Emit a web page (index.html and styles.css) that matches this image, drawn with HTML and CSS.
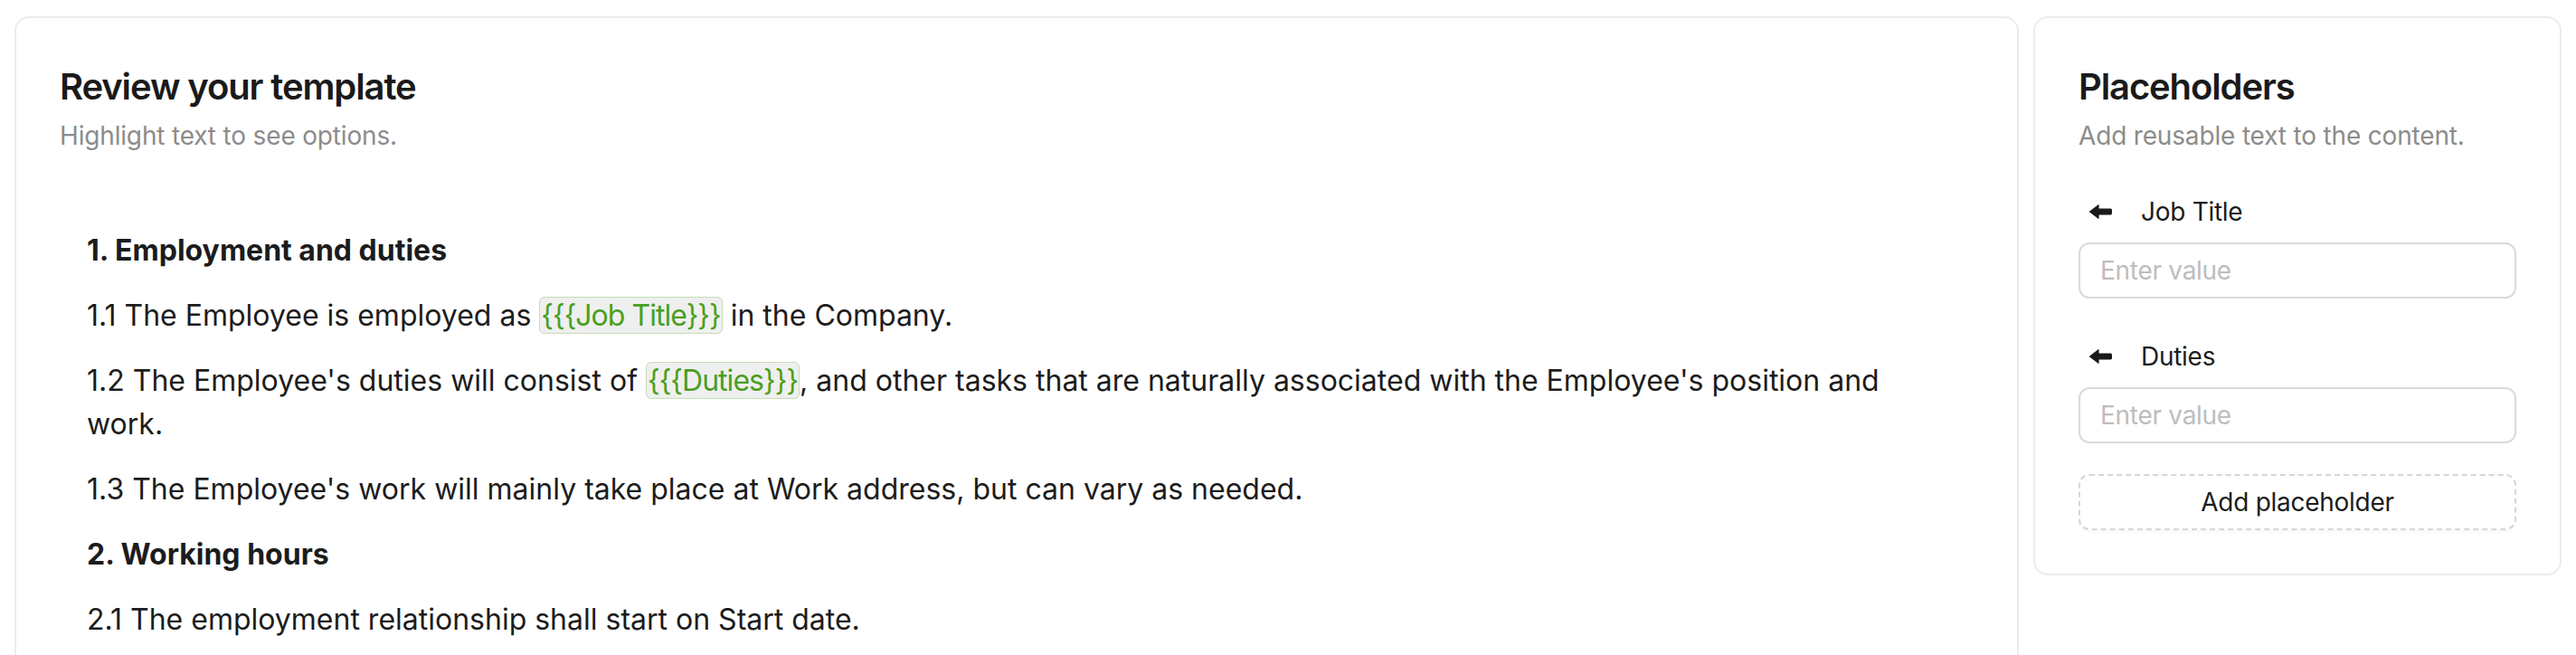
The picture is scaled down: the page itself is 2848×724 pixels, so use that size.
FILE: index.html
```html
<!DOCTYPE html>
<html lang="en">
<head>
<meta charset="utf-8">
<title>Review your template</title>
<link rel="stylesheet" href="styles.css">
</head>
<body>
<div class="page">
  <section class="card editor">
    <header class="card-head">
      <h1 class="card-title">Review your template</h1>
      <p class="card-sub">Highlight text to see options.</p>
    </header>
    <div class="doc">
      <p class="doc-h">1. Employment and duties</p>
      <p class="doc-p">1.1 The Employee is employed as <span class="chip">{{{Job Title}}}</span> in the Company.</p>
      <p class="doc-p">1.2 The Employee's duties will consist of <span class="chip">{{{Duties}}}</span>, and other tasks that are naturally associated with the Employee's position and work.</p>
      <p class="doc-p">1.3 The Employee's work will mainly take place at Work address, but can vary as needed.</p>
      <p class="doc-h">2. Working hours</p>
      <p class="doc-p">2.1 The employment relationship shall start on Start date.</p>
    </div>
  </section>
  <aside class="card side">
    <header class="card-head">
      <h2 class="card-title">Placeholders</h2>
      <p class="card-sub">Add reusable text to the content.</p>
    </header>
    <div class="ph-list">
      <div class="ph-group">
        <div class="ph-label">
          <span class="ph-arrow"><svg width="26" height="18" viewBox="0 0 26 18"><path d="M0.6 9 L10.4 1.4 Q11.6 0.6 11.6 2 V5.6 H24.4 Q26 5.6 26 7.2 V10.8 Q26 12.4 24.4 12.4 H11.6 V16 Q11.6 17.4 10.4 16.6 Z" fill="#1a1a1a"/></svg></span>
          <span class="ph-name">Job Title</span>
        </div>
        <input class="ph-input" type="text" placeholder="Enter value">
      </div>
      <div class="ph-group">
        <div class="ph-label">
          <span class="ph-arrow"><svg width="26" height="18" viewBox="0 0 26 18"><path d="M0.6 9 L10.4 1.4 Q11.6 0.6 11.6 2 V5.6 H24.4 Q26 5.6 26 7.2 V10.8 Q26 12.4 24.4 12.4 H11.6 V16 Q11.6 17.4 10.4 16.6 Z" fill="#1a1a1a"/></svg></span>
          <span class="ph-name">Duties</span>
        </div>
        <input class="ph-input" type="text" placeholder="Enter value">
      </div>
      <button class="ph-add" type="button">Add placeholder</button>
    </div>
  </aside>
</div>
</body>
</html>
```

FILE: styles.css
```css
* { box-sizing: border-box; }

html, body {
  margin: 0;
  background: #ffffff;
  font-family: Inter, "Noto Sans", "Liberation Sans", sans-serif;
  color: #1c1c1c;
}

.page {
  display: flex;
  align-items: flex-start;
  gap: 16px;
  padding: 18px 16px 0 16px;
}

.card {
  border: 2px solid #ececec;
  border-radius: 16px;
  background: #ffffff;
  padding: 52px 48px 48px 48px;
}

.editor {
  flex: 1 1 auto;
  min-width: 0;
}

.side {
  flex: 0 0 584px;
}

.card-title {
  margin: 0;
  font-size: 40px;
  line-height: 48px;
  font-weight: 600;
  color: #1a1a1a;
  letter-spacing: -0.028em;
}

.card-sub {
  margin: 10px 0 0 0;
  font-size: 28px;
  line-height: 40px;
  color: #8c8c8c;
  letter-spacing: -0.006em;
}

.doc {
  margin-top: 83px;
  padding: 0 30px;
  font-size: 32px;
  line-height: 48px;
  color: #1c1c1c;
}

.doc p {
  margin: 0 0 24px 0;
}

.doc-h {
  font-weight: 700;
}

.chip {
  color: #4a9f1e;
  background: #efefef;
  border: 1px solid #c6ddb7;
  border-radius: 6px;
  padding: 0 1px;
  letter-spacing: -0.03em;
}

.ph-list {
  display: flex;
  flex-direction: column;
}

.ph-group {
  margin-top: 44px;
  display: flex;
  flex-direction: column;
  gap: 14px;
}

.ph-label {
  display: flex;
  align-items: center;
  gap: 21px;
  height: 40px;
  font-size: 28px;
  color: #1c1c1c;
  letter-spacing: -0.01em;
}

.ph-arrow {
  width: 48px;
  display: flex;
  justify-content: center;
  align-items: center;
}

.ph-arrow svg { display: block; }

.ph-input {
  height: 62px;
  width: 100%;
  border: 2px solid #dadada;
  border-radius: 12px;
  padding: 0 22px;
  font-family: inherit;
  font-size: 28px;
  letter-spacing: -0.01em;
  color: #1c1c1c;
  background: #ffffff;
  outline: none;
}

.ph-input::placeholder {
  color: #bdbdbd;
}

.ph-add {
  margin-top: 34px;
  height: 62px;
  width: 100%;
  border: 2px dashed #d6d6d6;
  border-radius: 12px;
  background: #ffffff;
  font-family: inherit;
  font-size: 28px;
  letter-spacing: -0.01em;
  color: #1c1c1c;
  box-shadow: 0 2px 3px rgba(0, 0, 0, 0.04);
}
```
